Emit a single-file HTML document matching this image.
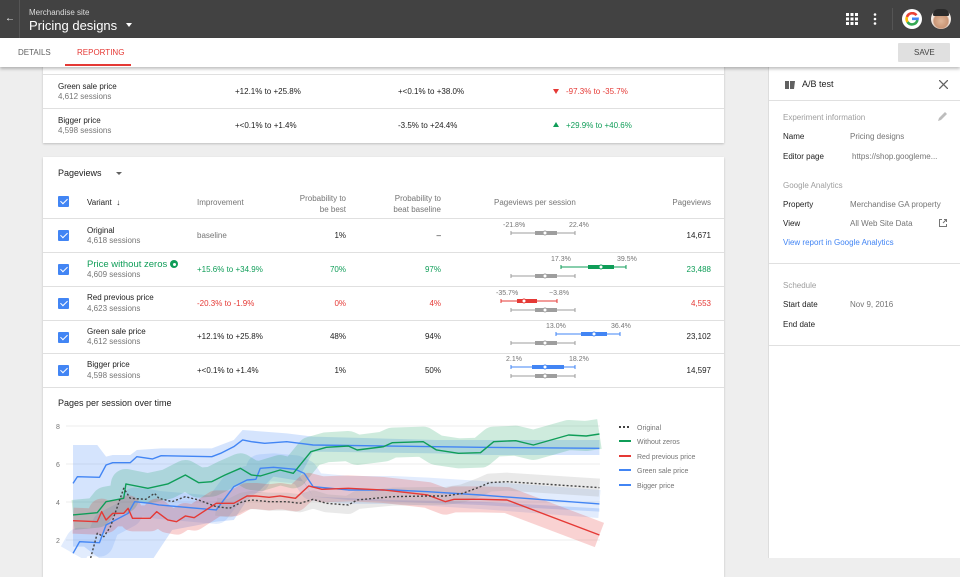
<!DOCTYPE html>
<html><head><meta charset="utf-8"><style>
*{box-sizing:border-box;margin:0;padding:0}
body{width:960px;height:558px;overflow:hidden;background:#eeeeee;font-family:"Liberation Sans",Arial,sans-serif;color:#212121;position:relative}
.abs{position:absolute}
.hdr{left:0;top:0;width:960px;height:38px;background:#424242}
.tabs{left:0;top:38px;width:960px;height:29px;background:#fff;box-shadow:0 2px 3px rgba(0,0,0,.25);z-index:3}
.card{background:#fff;box-shadow:0 1px 2px rgba(0,0,0,.2)}
.t{position:absolute;font-size:8px;white-space:nowrap}
.g{color:#757575}
.cb{position:absolute;width:11px;height:11px;background:#4285f4;border-radius:1px}
.cb:after{content:"";position:absolute;left:3.5px;top:1px;width:3px;height:6px;border:solid #fff;border-width:0 1.5px 1.5px 0;transform:rotate(45deg)}
.line{position:absolute;height:1px;background:#e0e0e0}
.r{text-align:right}
</style></head><body>
<div class="abs hdr">
 <div class="t" style="left:5px;top:13px;color:#fff;font-size:10px">←</div>
 <div class="abs" style="left:19px;top:0;width:1px;height:38px;background:#555"></div>
 <div class="t" style="left:29px;top:8px;color:#ddd;font-size:8px">Merchandise site</div>
 <div class="t" style="left:29px;top:18px;color:#fff;font-size:13px">Pricing designs</div>
 <div class="abs" style="left:126px;top:23px;border:3px solid transparent;border-top:4px solid #fff"></div>
 <svg class="abs" style="left:846px;top:13px" width="12" height="12"><g fill="#fff"><rect x="0" y="0" width="3" height="3"/><rect x="4.5" y="0" width="3" height="3"/><rect x="9" y="0" width="3" height="3"/><rect x="0" y="4.5" width="3" height="3"/><rect x="4.5" y="4.5" width="3" height="3"/><rect x="9" y="4.5" width="3" height="3"/><rect x="0" y="9" width="3" height="3"/><rect x="4.5" y="9" width="3" height="3"/><rect x="9" y="9" width="3" height="3"/></g></svg>
 <svg class="abs" style="left:873px;top:13px" width="4" height="12"><g fill="#fff"><circle cx="2" cy="1.5" r="1.3"/><circle cx="2" cy="6" r="1.3"/><circle cx="2" cy="10.5" r="1.3"/></g></svg>
 <div class="abs" style="left:892px;top:8px;width:1px;height:22px;background:#555"></div>
 <div class="abs" style="left:902px;top:9px;width:20px;height:20px;border-radius:50%;background:#fff"></div>
 <svg class="abs" style="left:905px;top:12px" width="14" height="14" viewBox="0 0 14 14" fill="none" stroke-width="2.6"><path d="M11.5 3.2A5.5 5.5 0 0 0 2 5" stroke="#ea4335"/><path d="M2 5A5.5 5.5 0 0 0 2.5 10" stroke="#fbbc05"/><path d="M2.5 10A5.5 5.5 0 0 0 12.4 8" stroke="#34a853"/><path d="M12.4 8L12.5 6.8H7" stroke="#4285f4"/></svg>
 <div class="abs" style="left:931px;top:9px;width:20px;height:20px;border-radius:50%;background:radial-gradient(circle at 50% 60%,#e0b89a 0,#c99575 45%,#f4ece6 55%)"></div>
 <div class="abs" style="left:933px;top:9px;width:16px;height:7px;border-radius:8px 8px 2px 2px;background:#2a2a2a"></div>
</div>
<div class="abs tabs">
 <div class="t g" style="left:18px;top:10px;color:#616161">DETAILS</div>
 <div class="t" style="left:77px;top:10px;color:#e53935">REPORTING</div>
 <div class="abs" style="left:65px;top:26px;width:66px;height:2px;background:#e53935"></div>
 <div class="abs" style="left:898px;top:5px;width:52px;height:19px;background:#e0e0e0;border-radius:1px"></div>
 <div class="t" style="left:914px;top:10px;color:#424242">SAVE</div>
</div>

<div class="abs card" style="left:43px;top:60px;width:681px;height:83px">
 <div class="line" style="left:0;top:14px;width:681px"></div>
 <div class="t" style="left:15px;top:22px">Green sale price</div>
 <div class="t g" style="left:15px;top:32px">4,612 sessions</div>
 <div class="t" style="left:192px;top:27px">+12.1% to +25.8%</div>
 <div class="t" style="left:355px;top:27px">+&lt;0.1% to +38.0%</div>
 <div class="abs" style="left:510px;top:29px;border:3.5px solid transparent;border-top:5px solid #e53935"></div>
 <div class="t" style="left:523px;top:27px;color:#e53935">-97.3% to -35.7%</div>
 <div class="line" style="left:0;top:48px;width:681px"></div>
 <div class="t" style="left:15px;top:56px">Bigger price</div>
 <div class="t g" style="left:15px;top:66px">4,598 sessions</div>
 <div class="t" style="left:192px;top:61px">+&lt;0.1% to +1.4%</div>
 <div class="t" style="left:355px;top:61px">-3.5% to +24.4%</div>
 <div class="abs" style="left:510px;top:59px;border:3.5px solid transparent;border-bottom:5px solid #0f9d58"></div>
 <div class="t" style="left:523px;top:61px;color:#0f9d58">+29.9% to +40.6%</div>
</div>

<div class="abs card" style="left:43px;top:157px;width:681px;height:420px">
 <div class="t" style="left:15px;top:11px;font-size:9px">Pageviews</div>
 <div class="abs" style="left:73px;top:15px;border:3px solid transparent;border-top:3.5px solid #616161"></div>
 <div class="cb" style="left:15px;top:39px"></div>
 <div class="t" style="left:44px;top:41px">Variant&nbsp; ↓</div>
 <div class="t g" style="left:154px;top:41px">Improvement</div>
 <div class="t g r" style="left:240px;top:36px;width:63px;line-height:11px">Probability to<br>be best</div>
 <div class="t g r" style="left:335px;top:36px;width:63px;line-height:11px">Probability to<br>beat baseline</div>
 <div class="t g" style="left:451px;top:41px">Pageviews per session</div>
 <div class="t g r" style="left:600px;top:41px;width:68px">Pageviews</div>
 <div class="line" style="left:0;top:61px;width:681px"></div>
 <div class="line" style="left:0;top:95px;width:681px"></div>
 <div class="line" style="left:0;top:129px;width:681px"></div>
 <div class="line" style="left:0;top:163px;width:681px"></div>
 <div class="line" style="left:0;top:196px;width:681px"></div>
 <div class="line" style="left:0;top:230px;width:681px"></div>

 <div class="cb" style="left:15px;top:73px"></div>
 <div class="t" style="left:44px;top:69px">Original</div><div class="t g" style="left:44px;top:79px">4,618 sessions</div>
 <div class="t g" style="left:154px;top:74px">baseline</div>
 <div class="t r" style="left:240px;top:74px;width:63px">1%</div>
 <div class="t r" style="left:335px;top:74px;width:63px">–</div>
 <div class="t r" style="left:600px;top:74px;width:68px">14,671</div>

 <div class="cb" style="left:15px;top:107px"></div>
 <div class="t" style="left:44px;top:102px;color:#0f9d58;font-size:9.5px">Price without zeros</div>
 <div class="abs" style="left:127px;top:103px;width:8px;height:8px;border-radius:50%;background:#0f9d58"></div>
 <div class="abs" style="left:129.5px;top:105.5px;width:3px;height:3px;border-radius:50%;background:#fff"></div>
 <div class="t g" style="left:44px;top:113px">4,609 sessions</div>
 <div class="t" style="left:154px;top:108px;color:#0f9d58">+15.6% to +34.9%</div>
 <div class="t r" style="left:240px;top:108px;width:63px;color:#0f9d58">70%</div>
 <div class="t r" style="left:335px;top:108px;width:63px;color:#0f9d58">97%</div>
 <div class="t r" style="left:600px;top:108px;width:68px;color:#0f9d58">23,488</div>

 <div class="cb" style="left:15px;top:141px"></div>
 <div class="t" style="left:44px;top:136px">Red previous price</div><div class="t g" style="left:44px;top:147px">4,623 sessions</div>
 <div class="t" style="left:154px;top:142px;color:#e53935">-20.3% to -1.9%</div>
 <div class="t r" style="left:240px;top:142px;width:63px;color:#e53935">0%</div>
 <div class="t r" style="left:335px;top:142px;width:63px;color:#e53935">4%</div>
 <div class="t r" style="left:600px;top:142px;width:68px;color:#e53935">4,553</div>

 <div class="cb" style="left:15px;top:175px"></div>
 <div class="t" style="left:44px;top:170px">Green sale price</div><div class="t g" style="left:44px;top:180px">4,612 sessions</div>
 <div class="t" style="left:154px;top:175px">+12.1% to +25.8%</div>
 <div class="t r" style="left:240px;top:175px;width:63px">48%</div>
 <div class="t r" style="left:335px;top:175px;width:63px">94%</div>
 <div class="t r" style="left:600px;top:175px;width:68px">23,102</div>

 <div class="cb" style="left:15px;top:208px"></div>
 <div class="t" style="left:44px;top:203px">Bigger price</div><div class="t g" style="left:44px;top:214px">4,598 sessions</div>
 <div class="t" style="left:154px;top:209px">+&lt;0.1% to +1.4%</div>
 <div class="t r" style="left:240px;top:209px;width:63px">1%</div>
 <div class="t r" style="left:335px;top:209px;width:63px">50%</div>
 <div class="t r" style="left:600px;top:209px;width:68px">14,597</div>

 <svg class="abs" style="left:440px;top:61px" width="160" height="170" font-family="Liberation Sans,Arial" font-size="7" fill="#757575">
  <defs><g id="gb"><line x1="28" x2="92" y1="0" y2="0" stroke="#9e9e9e" stroke-width="1"/><line x1="28" x2="28" y1="-2" y2="2" stroke="#9e9e9e"/><line x1="92" x2="92" y1="-2" y2="2" stroke="#9e9e9e"/><rect x="52" y="-2" width="22" height="4" fill="#9e9e9e"/><circle cx="62" cy="0" r="2" fill="#fff" stroke="#9e9e9e"/></g></defs>
  <text x="20" y="9">-21.8%</text><text x="86" y="9">22.4%</text><use href="#gb" y="15"/>
  <text x="68" y="43">17.3%</text><text x="134" y="43">39.5%</text>
  <line x1="78" x2="143" y1="49" y2="49" stroke="#0f9d58"/><line x1="78" x2="78" y1="47" y2="51" stroke="#0f9d58"/><line x1="143" x2="143" y1="47" y2="51" stroke="#0f9d58"/><rect x="105" y="47" width="26" height="4" fill="#0f9d58"/><circle cx="118" cy="49" r="2" fill="#fff" stroke="#0f9d58"/>
  <use href="#gb" y="58"/>
  <text x="13" y="77">-35.7%</text><text x="66" y="77">−3.8%</text>
  <line x1="18" x2="74" y1="83" y2="83" stroke="#e53935"/><line x1="18" x2="18" y1="81" y2="85" stroke="#e53935"/><line x1="74" x2="74" y1="81" y2="85" stroke="#e53935"/><rect x="34" y="81" width="20" height="4" fill="#e53935"/><circle cx="41" cy="83" r="2" fill="#fff" stroke="#e53935"/>
  <use href="#gb" y="92"/>
  <text x="63" y="110">13.0%</text><text x="128" y="110">36.4%</text>
  <line x1="73" x2="137" y1="116" y2="116" stroke="#4285f4"/><line x1="73" x2="73" y1="114" y2="118" stroke="#4285f4"/><line x1="137" x2="137" y1="114" y2="118" stroke="#4285f4"/><rect x="98" y="114" width="26" height="4" fill="#4285f4"/><circle cx="111" cy="116" r="2" fill="#fff" stroke="#4285f4"/>
  <use href="#gb" y="125"/>
  <text x="23" y="143">2.1%</text><text x="86" y="143">18.2%</text>
  <line x1="28" x2="92" y1="149" y2="149" stroke="#4285f4"/><line x1="28" x2="28" y1="147" y2="151" stroke="#4285f4"/><line x1="92" x2="92" y1="147" y2="151" stroke="#4285f4"/><rect x="49" y="147" width="32" height="4" fill="#4285f4"/><circle cx="62" cy="149" r="2" fill="#fff" stroke="#4285f4"/>
  <use href="#gb" y="158"/>
 </svg>
 <div class="t" style="left:15px;top:241px;font-size:9px">Pages per session over time</div>
</div>

<svg class="abs" style="left:0;top:0" width="730" height="558" font-family="Liberation Sans,Arial" font-size="7">
 <g fill="#757575"><text x="56" y="429">8</text><text x="56" y="467">6</text><text x="56" y="505">4</text><text x="56" y="543">2</text></g>
 <g stroke="#eeeeee"><line x1="66" x2="600" y1="426" y2="426"/><line x1="66" x2="600" y1="464" y2="464"/><line x1="66" x2="600" y1="502" y2="502"/><line x1="66" x2="600" y1="540" y2="540"/></g>
 <g transform="translate(40,390) scale(0.4405,0.3333)" fill="none" stroke-linejoin="round">
  <polygon fill="#4285f4" opacity="0.22" points="75,165 130,165 150,200 165,195 205,195 220,180 275,175 390,175 440,150 460,120 560,130 620,140 900,150 1270,150 1270,195 1000,195 900,190 620,185 590,260 620,320 800,330 1000,335 1270,355 1270,365 1000,345 800,335 700,330 620,320 600,275 530,260 500,300 470,330 440,390 400,395 300,420 250,520 220,560 160,560 140,510 100,470 75,470"/>
  <polyline stroke="#4285f4" stroke-width="28" opacity="0.15" vector-effect="non-scaling-stroke" points="75,490 90,455 135,458 150,405 200,370 215,335 250,340 270,345 400,360 440,290 470,270 490,268 500,235 530,232 580,238 600,250 620,290 700,300 800,300 880,305 1000,315 1270,342"/>
  <polyline stroke="#0f9d58" stroke-width="30" opacity="0.2" vector-effect="non-scaling-stroke" points="75,375 130,368 150,335 190,325 195,282 245,295 290,282 330,255 360,278 390,275 420,255 455,235 480,255 500,258 545,240 575,250 615,185 650,172 700,168 720,180 780,170 800,158 870,155 900,180 950,190 1000,188 1030,155 1080,152 1120,165 1200,135 1240,138 1270,132"/>
  <polyline stroke="#e53935" stroke-width="26" opacity="0.22" vector-effect="non-scaling-stroke" points="75,392 130,395 140,365 150,390 165,370 190,370 200,355 210,385 250,385 265,365 290,390 310,395 330,378 350,383 400,340 440,340 470,318 490,318 520,322 545,318 580,325 610,288 640,298 700,295 780,300 880,315 920,335 940,328 1000,328 1060,330 1270,435"/>
  <polyline stroke="#9e9e9e" stroke-width="18" opacity="0.22" vector-effect="non-scaling-stroke" points="400,350 430,355 460,335 480,330 520,335 560,335 590,340 620,328 650,340 700,345 720,330 800,320 880,318 920,318 960,310 1000,290 1020,278 1060,275 1270,293"/>
  <polyline stroke="#4285f4" stroke-width="1.4" vector-effect="non-scaling-stroke" points="75,490 90,455 135,458 150,405 200,370 215,335 250,340 270,345 400,360 440,290 470,270 490,268 500,235 530,232 580,238 600,250 620,290 700,300 800,300 880,305 1000,315 1270,342"/>
  <polyline stroke="#4285f4" stroke-width="1.4" vector-effect="non-scaling-stroke" points="75,280 85,260 135,262 150,225 165,218 205,218 220,200 255,207 275,197 390,200 410,190 440,170 460,150 480,155 510,160 560,155 590,160 620,165 900,170 1000,172 1270,175"/>
  <polyline stroke="#0f9d58" stroke-width="1.4" vector-effect="non-scaling-stroke" points="75,375 130,368 150,335 190,325 195,282 245,295 290,282 330,255 360,278 390,275 420,255 455,235 480,255 500,258 545,240 575,250 615,185 650,172 700,168 720,180 780,170 800,158 870,155 900,180 950,190 1000,188 1030,155 1080,152 1120,165 1200,135 1240,138 1270,132"/>
  <polyline stroke="#e53935" stroke-width="1.4" vector-effect="non-scaling-stroke" points="75,392 130,395 140,365 150,390 165,370 190,370 200,355 210,385 250,385 265,365 290,390 310,395 330,378 350,383 400,340 440,340 470,318 490,318 520,322 545,318 580,325 610,288 640,298 700,295 780,300 880,315 920,335 940,328 1000,328 1060,330 1270,435"/>
  <polyline stroke="#424242" stroke-width="1.4" stroke-dasharray="2 2" vector-effect="non-scaling-stroke" points="115,504 130,430 145,440 160,410 190,295 205,325 240,328 260,310 270,325 300,335 330,320 360,330 400,350 430,355 460,335 480,330 520,335 560,335 590,340 620,328 650,340 700,345 720,330 800,320 880,318 920,318 960,310 1000,290 1020,278 1060,275 1270,293"/>
 </g>
 <g fill="#757575">
  <line x1="619" x2="631" y1="427" y2="427" stroke="#424242" stroke-width="2" stroke-dasharray="2 2"/><text x="637" y="430">Original</text>
  <line x1="619" x2="631" y1="441" y2="441" stroke="#0f9d58" stroke-width="2"/><text x="637" y="444">Without zeros</text>
  <line x1="619" x2="631" y1="456" y2="456" stroke="#e53935" stroke-width="2"/><text x="637" y="459">Red previous price</text>
  <line x1="619" x2="631" y1="470" y2="470" stroke="#4285f4" stroke-width="2"/><text x="637" y="473">Green sale price</text>
  <line x1="619" x2="631" y1="485" y2="485" stroke="#4285f4" stroke-width="2"/><text x="637" y="488">Bigger price</text>
 </g>
</svg>

<div class="abs" style="left:768px;top:67px;width:192px;height:491px;background:#fff;border-left:1px solid #ddd">
 <svg class="abs" style="left:16px;top:13px" width="10" height="9"><path d="M0 1h4v8H0zM5 1h5l-1 8H5z" fill="#616161"/></svg>
 <div class="t" style="left:33px;top:12px;font-size:9px">A/B test</div>
 <svg class="abs" style="left:170px;top:13px" width="9" height="9"><path d="M0 0L9 9M9 0L0 9" stroke="#616161" stroke-width="1.3"/></svg>
 <div class="line" style="left:0;top:33px;width:192px"></div>
 <div class="t" style="left:14px;top:46px;color:#9e9e9e">Experiment information</div>
 <svg class="abs" style="left:168px;top:44px" width="11" height="11"><path d="M1 10l1-3 6-6 2 2-6 6z" fill="#bdbdbd"/></svg>
 <div class="t" style="left:14px;top:65px">Name</div><div class="t g" style="left:81px;top:65px">Pricing designs</div>
 <div class="t" style="left:14px;top:85px">Editor page</div><div class="t g" style="left:83px;top:85px">https://shop.googleme...</div>
 <div class="t" style="left:14px;top:114px;color:#9e9e9e">Google Analytics</div>
 <div class="t" style="left:14px;top:133px">Property</div><div class="t g" style="left:81px;top:133px">Merchandise GA property</div>
 <div class="t" style="left:14px;top:152px">View</div><div class="t g" style="left:81px;top:152px">All Web Site Data</div>
 <svg class="abs" style="left:170px;top:152px" width="8" height="8"><path d="M3 .5H.5v7h7V5M4 4L7.5.5M5 .5h2.5V3" fill="none" stroke="#757575"/></svg>
 <div class="t" style="left:14px;top:171px;color:#4285f4">View report in Google Analytics</div>
 <div class="line" style="left:0;top:196px;width:192px"></div>
 <div class="t" style="left:14px;top:214px;color:#9e9e9e">Schedule</div>
 <div class="t" style="left:14px;top:233px">Start date</div><div class="t g" style="left:81px;top:233px">Nov 9, 2016</div>
 <div class="t" style="left:14px;top:253px">End date</div>
 <div class="line" style="left:0;top:278px;width:192px"></div>
</div>
</body></html>
